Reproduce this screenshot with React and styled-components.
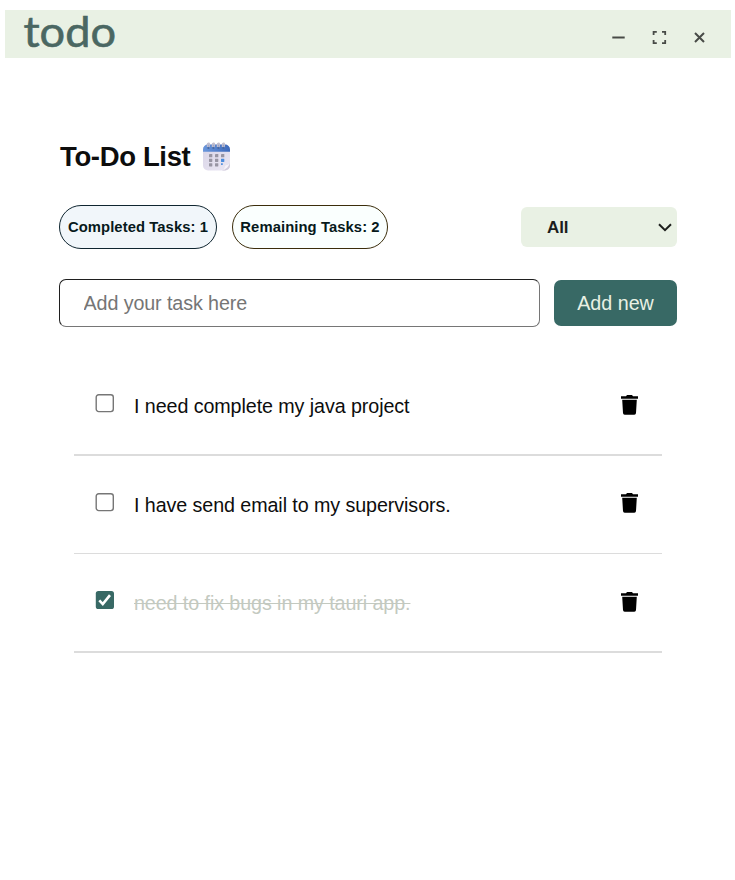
import React, { useState } from "react";
import styled, { createGlobalStyle } from "styled-components";

const Global = createGlobalStyle`
  * { box-sizing: border-box; }
  body { margin: 0; background: #fff; font-family: "Liberation Sans", Arial, sans-serif; color: #0d0d0d; }
`;

const Page = styled.div`
  width: 735px;
  height: 880px;
  padding: 10px 4px 0 5px;
  overflow: hidden;
`;

const TitleBar = styled.header`
  height: 48px;
  background: #e9f1e4;
  display: flex;
  justify-content: space-between;
  padding: 0 22px 0 18px;
`;

const Logo = styled.svg`
  display: block;
  overflow: visible;
  font-family: Lato, sans-serif;
  font-size: 42.5px;
  font-weight: 400;
  fill: #4a6762;
  stroke: #4a6762;
  stroke-width: 0.6px;
`;

const WindowControls = styled.div`
  display: flex;
  gap: 23px;
  padding-top: 18px;
`;

const ControlButton = styled.button`
  border: 0;
  padding: 0;
  width: 18px;
  height: 18px;
  background: none;
  svg { display: block; }
`;

const Main = styled.main`
  padding: 83px 54px 0 54px;
`;

const Heading = styled.h1`
  display: flex;
  align-items: center;
  gap: 12px;
  height: 32px;
  margin: 0;
  padding-left: 1px;
  font-size: 27.5px;
  letter-spacing: -0.35px;
  white-space: nowrap;
`;

const Filters = styled.div`
  display: flex;
  align-items: center;
  height: 44px;
  margin-top: 32px;
`;

const Counter = styled.div`
  display: flex;
  align-items: center;
  justify-content: center;
  width: ${(p) => p.$width};
  height: 44px;
  margin-right: 15px;
  border: 1px solid ${(p) => p.$border};
  border-radius: 22px;
  background: ${(p) => p.$fill};
  color: #07191b;
  font-size: 14.8px;
  letter-spacing: 0.08px;
  font-weight: 700;
  white-space: nowrap;
`;

const FilterSelect = styled.div`
  display: flex;
  align-items: center;
  justify-content: space-between;
  width: 156px;
  height: 40px;
  margin-left: auto;
  padding: 1px 4px 0 26px;
  border-radius: 6px;
  background: #e9f1e4;
  font-size: 17px;
  letter-spacing: -0.1px;
  font-weight: 700;
  color: #1c1e1c;
`;

const EntryRow = styled.form`
  display: flex;
  align-items: center;
  gap: 14px;
  height: 48px;
  margin-top: 30px;
`;

const TaskInput = styled.input`
  width: 481px;
  height: 48px;
  padding: 0 24px;
  border: 1px solid;
  border-color: #1f1f1f #767676 #767676 #1f1f1f;
  border-radius: 7px;
  outline: none;
  font: 19.7px "Liberation Sans", Arial, sans-serif;
  letter-spacing: -0.09px;
  text-indent: -0.5px;
  &::placeholder { color: #757575; }
`;

const AddButton = styled.button`
  width: 123px;
  height: 46px;
  padding: 0;
  border: 0;
  border-radius: 7px;
  background: #386965;
  color: #e9f1e4;
  font: 19.7px "Liberation Sans", Arial, sans-serif;
`;

const TaskList = styled.ul`
  list-style: none;
  margin: 31px 15px 0;
  padding: 0;
`;

const Check = styled.button`
  width: 20px;
  height: 20px;
  margin: 0 19px 0 0;
  padding: 0;
  border: 0;
  background: none;
  svg { display: block; }
`;

const TaskText = styled.span`
  flex: 1;
  font-size: 19.7px;
  line-height: 24px;
  letter-spacing: -0.08px;
  white-space: nowrap;
  color: ${(p) => (p.$done ? "#c3c9c0" : "#0d0d0d")};
  text-decoration: ${(p) => (p.$done ? "line-through" : "none")};
`;

const DeleteButton = styled.button`
  width: 17px;
  height: 20px;
  margin-top: 1px;
  padding: 0;
  border: 0;
  background: none;
  svg { display: block; }
`;

const TaskRow = styled.li`
  display: flex;
  height: 98px;
  padding: 36px 24px 0 21px;
  border-bottom: 2px solid #dcdcdc;

  &:nth-child(even) {
    padding-top: 37px;
    border-bottom-width: 1px;
    ${DeleteButton} { margin-top: 0; }
  }
  &:nth-child(3) {
    height: 99px;
    padding-top: 37px;
  }
`;

const Calendar = () => (
  <svg width="29" height="30" viewBox="0 0 29 30">
    <defs>
      <linearGradient id="calBody" x1="0" y1="0" x2="1" y2="1">
        <stop offset="0" stopColor="#d8d4e6" />
        <stop offset="1" stopColor="#ebe7f4" />
      </linearGradient>
      <linearGradient id="calTop" x1="0" y1="0" x2="1" y2="0">
        <stop offset="0" stopColor="#6a97dc" />
        <stop offset="1" stopColor="#3d69bb" />
      </linearGradient>
    </defs>
    <rect x="1" y="2.5" width="27" height="26" rx="5" fill="url(#calBody)" />
    <path d="M1 9.8V7.5a5 5 0 0 1 5-5h17a5 5 0 0 1 5 5v2.3z" fill="url(#calTop)" />
    <path d="M20 28.5c3-1 2-4 3-5 2-1 4-1 5-3v3a5 5 0 0 1-5 5z" fill="#d1cbdc" />
    <path d="M20 28.5c3-1 2-4 3-5 2-1 4-1 5-3-1 4-4 7-8 8z" fill="#f6f3fa" />
    {[5.5, 10.5, 15.5, 20.5].map((x) => (
      <g key={x}>
        <circle cx={x + 0.9} cy="6" r="1.1" fill="#4a689f" />
        <path d={`M${x} 5V2.8q0-2 1.5-1.6Q${x + 2.3} 1.8 ${x + 1.5} 5`} fill="none" stroke="#c0bccb" strokeWidth="1.4" />
      </g>
    ))}
    {[12, 16.7, 21.2].map((y) =>
      [7, 13, 19].map((x) => (
        <rect
          key={`${x}-${y}`}
          x={x}
          y={y}
          width={x === 19 && y === 21.2 ? 1.8 : 3.3}
          height={x === 19 && y === 21.2 ? 1.8 : 3.3}
          rx=".4"
          fill={x === 19 && y >= 16.7 ? "#4c8ddd" : "#9895a3"}
        />
      ))
    )}
  </svg>
);

const CheckMark = ({ checked }) => (
  <svg width="20" height="20" viewBox="0 0 20 20" fill="none">
    {checked ? (
      <>
        <rect x="0.8" y="0" width="18.2" height="18" rx="2.6" fill="#386965" />
        <path d="M4.3 9.4l3.5 3.7 7.2-9" stroke="#fff" strokeWidth="2.6" />
      </>
    ) : (
      <rect x="1.2" y="0.7" width="17.1" height="16.9" rx="2.5" fill="#fff" stroke="#767676" strokeWidth="1.4" />
    )}
  </svg>
);

const Trash = () => (
  <svg width="17" height="20" viewBox="0 0 17 20">
    <path d="M0 1.2h5L6 0h5l1 1.2h5v2.6H0zM1.2 4.7h14.6l-.8 13.4q-.1 1.6-1.7 1.6H3.7q-1.6 0-1.7-1.6z" fill="#000" />
  </svg>
);

const TASKS = [
  { id: 1, text: "I need complete my java project", done: false },
  { id: 2, text: "I have send email to my supervisors.", done: false },
  { id: 3, text: "need to fix bugs in my tauri app.", done: true },
];

export default function App() {
  const [tasks, setTasks] = useState(TASKS);
  const toggle = (id) =>
    setTasks((list) => list.map((t) => (t.id === id ? { ...t, done: !t.done } : t)));
  const remove = (id) => setTasks((list) => list.filter((t) => t.id !== id));
  const completed = tasks.filter((t) => t.done).length;

  return (
    <Page>
      <Global />
      <TitleBar>
        <Logo width="100" height="48">
          <text x="0.5" y="36.5" textLength="92.5" lengthAdjust="spacingAndGlyphs">todo</text>
        </Logo>
        <WindowControls>
          <ControlButton aria-label="Minimize">
            <svg width="18" height="18" viewBox="0 0 18 18">
              <path d="M3.3 9.5h12.4" stroke="#484b47" strokeWidth="2" />
            </svg>
          </ControlButton>
          <ControlButton aria-label="Maximize">
            <svg width="18" height="18" viewBox="0 0 18 18" fill="none" stroke="#484b47" strokeWidth="1.8">
              <path d="M3.6 7V3.9h3.2M12 3.9h3.2V7M15.2 12v3.2H12M6.8 15.2H3.6V12" />
            </svg>
          </ControlButton>
          <ControlButton aria-label="Close">
            <svg width="18" height="18" viewBox="0 0 18 18">
              <path d="M4 5l9 9M13 5l-9 9" stroke="#484b47" strokeWidth="2" />
            </svg>
          </ControlButton>
        </WindowControls>
      </TitleBar>
      <Main>
        <Heading>
          To-Do List
          <Calendar />
        </Heading>
        <Filters>
          <Counter $width="158px" $border="#0f2530" $fill="#f1f6fa">
            Completed Tasks: {completed}
          </Counter>
          <Counter $width="156px" $border="#3b2d0b" $fill="#fafffe">
            Remaining Tasks: {tasks.length - completed}
          </Counter>
          <FilterSelect>
            All
            <svg width="16" height="16" viewBox="0 0 16 16">
              <path d="M2 4.3l6 5.8 6-5.8" fill="none" stroke="#1c1e1c" strokeWidth="2" />
            </svg>
          </FilterSelect>
        </Filters>
        <EntryRow onSubmit={(e) => e.preventDefault()}>
          <TaskInput placeholder="Add your task here" />
          <AddButton>Add new</AddButton>
        </EntryRow>
        <TaskList>
          {tasks.map((t) => (
            <TaskRow key={t.id}>
              <Check role="checkbox" aria-checked={t.done} onClick={() => toggle(t.id)}>
                <CheckMark checked={t.done} />
              </Check>
              <TaskText $done={t.done}>{t.text}</TaskText>
              <DeleteButton aria-label="Delete task" onClick={() => remove(t.id)}>
                <Trash />
              </DeleteButton>
            </TaskRow>
          ))}
        </TaskList>
      </Main>
    </Page>
  );
}
